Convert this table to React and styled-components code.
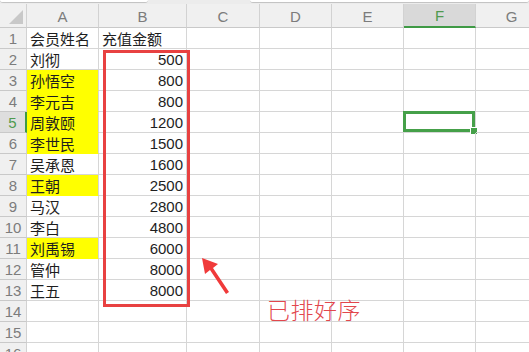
import React from "react";
import styled, { createGlobalStyle, css } from "styled-components";

const GlobalStyle = createGlobalStyle`
  html, body {
    margin: 0;
    padding: 0;
    background: #ffffff;
    overflow: hidden;
  }
  body {
    font-family: "Noto Sans CJK SC", "Liberation Sans", sans-serif;
  }
`;

const columns = ["A", "B", "C", "D", "E", "F", "G"];
const colWidths = [72, 88, 73, 72, 72, 72, 72];

const rows = [
    { name: "会员姓名", amount: "充值金额", head: true },
    { name: "刘彻", amount: "500" },
    { name: "孙悟空", amount: "800", mark: true },
    { name: "李元吉", amount: "800", mark: true },
    { name: "周敦颐", amount: "1200", mark: true },
    { name: "李世民", amount: "1500", mark: true },
    { name: "吴承恩", amount: "1600" },
    { name: "王朝", amount: "2500", mark: true },
    { name: "马汉", amount: "2800" },
    { name: "李白", amount: "4800" },
    { name: "刘禹锡", amount: "6000", mark: true },
    { name: "管仲", amount: "8000" },
    { name: "王五", amount: "8000" },
    { name: "", amount: "" },
    { name: "", amount: "" },
    { name: "", amount: "" },
];

export default function App() {
    return (
        <>
            <GlobalStyle />
            <Page>
                <TopStrip>
                    <BarPiece $w={148} />
                    <BarGap $w={102} />
                    <BarPiece $w={279} />
                </TopStrip>
                <Sheet>
                    <Grid>
                        <Corner>
                            <CornerTriangle />
                        </Corner>
                        {columns.map(c => (
                            <ColHeader key={c} $active={c === "F"}>{c}</ColHeader>
                        ))}

                        {rows.map((r, i) => {
                            const n = i + 1;
                            return (
                                <React.Fragment key={n}>
                                    <RowHeader $active={n === 5}>{n}</RowHeader>
                                    <Cell $fill={r.mark}>{r.name}</Cell>
                                    <Cell $num={!r.head}>{r.amount}</Cell>
                                    <Cell />
                                    <Cell />
                                    <Cell />
                                    <Cell $selected={n === 5}>
                                        {n === 5 && <FillHandle />}
                                    </Cell>
                                    <Cell />
                                </React.Fragment>
                            );
                        })}
                    </Grid>

                    <SortedFrame />
                    <Arrow viewBox="0 0 40 44" width="40" height="44">
                        <polygon points="3,3 6,19 11,15 27,39 30,37 14,13 19,9" fill="#f03a3a" />
                    </Arrow>
                    <Note>已排好序</Note>
                </Sheet>
            </Page>
        </>
    );
}

const Page = styled.div`
  width: 529px;
  height: 352px;
  overflow: hidden;
  background: #ffffff;
`;

const TopStrip = styled.div`
  display: flex;
  height: 4px;
  background: #ececec;
`;

const BarPiece = styled.div`
  width: ${p => p.$w}px;
  height: 2px;
  background: #ffffff;
  border-bottom: 1px solid #c4c4c4;
  border-radius: 0 0 3px 3px;
`;

const BarGap = styled.div`
  width: ${p => p.$w}px;
`;

const Sheet = styled.div`
  position: relative;
`;

const Grid = styled.div`
  display: grid;
  grid-template-columns: 27px ${colWidths.map(w => w + "px").join(" ")};
  grid-template-rows: 24px;
  grid-auto-rows: 21px;
`;

const headerBase = css`
  box-sizing: border-box;
  background: #f0f0f0;
  color: #7c7c7c;
  font-family: "Liberation Sans", "Noto Sans CJK SC", sans-serif;
  font-size: 15px;
  display: flex;
  align-items: center;
  justify-content: center;
  border-right: 1px solid #d2d2d2;
  border-bottom: 1px solid #c9c9c9;
`;

const Corner = styled.div`
  ${headerBase};
  position: relative;
`;

const CornerTriangle = styled.div`
  position: absolute;
  right: 3px;
  bottom: 3px;
  width: 0;
  height: 0;
  border-left: 14px solid transparent;
  border-bottom: 14px solid #c8c8c8;
`;

const ColHeader = styled.div`
  ${headerBase};
  padding-top: 1px;
  ${p => p.$active && css`
    background: #d9d9d9;
    color: #4f9a4f;
    border-bottom: 2px solid #3f9a45;
  `}
`;

const RowHeader = styled.div`
  ${headerBase};
  ${p => p.$active && css`
    background: #dedede;
    color: #4f9a4f;
    border-right: 2px solid #3f9a45;
  `}
`;

const Cell = styled.div`
  box-sizing: border-box;
  position: relative;
  border-right: 1px solid #d6d6d6;
  border-bottom: 1px solid #d6d6d6;
  padding: 0 3px;
  font-size: 15px;
  line-height: 21px;
  color: #1e1e1e;
  white-space: nowrap;
  text-align: ${p => (p.$num ? "right" : "left")};
  font-family: ${p => (p.$num ? '"Liberation Sans", "Noto Sans CJK SC", sans-serif' : '"Noto Sans CJK SC", sans-serif')};
  ${p => p.$fill && css`
    background: #ffff00;
    border-bottom-color: #ffff00;
  `}
  ${p => p.$selected && css`
    box-shadow: inset 0 0 0 3px #45a049;
    margin: -1px 0 0 -1px;
    width: calc(100% + 1px);
    height: calc(100% + 1px);
  `}
`;

const FillHandle = styled.div`
  position: absolute;
  right: -3px;
  bottom: -3px;
  width: 6px;
  height: 6px;
  background: #45a049;
  border: 1px solid #ffffff;
`;

const SortedFrame = styled.div`
  position: absolute;
  left: 103px;
  top: 46px;
  width: 87px;
  height: 257px;
  box-sizing: border-box;
  border: 3px solid #e84141;
  pointer-events: none;
`;

const Arrow = styled.svg`
  position: absolute;
  left: 199px;
  top: 251px;
`;

const Note = styled.div`
  position: absolute;
  left: 267px;
  top: 288px;
  font-family: "Noto Sans CJK SC", serif;
  font-size: 23px;
  font-weight: 300;
  color: #e2474d;
  letter-spacing: 0.5px;
`;
